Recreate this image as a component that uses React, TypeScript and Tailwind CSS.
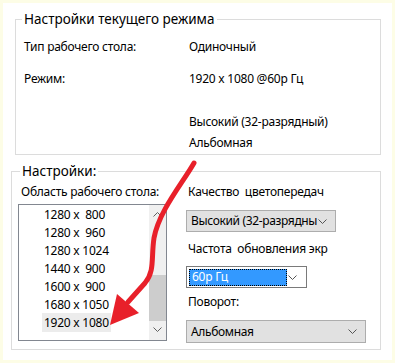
import React from 'react';

const font = { fontFamily: '"Noto Sans", "Open Sans", sans-serif' };

const Chevron = ({ className = '' }: { className?: string }) => (
  <svg width="9" height="5" viewBox="0 0 9 5" className={className}>
    <path d="M0.5 0.5 L4.5 4.5 L8.5 0.5" fill="none" stroke="currentColor" strokeWidth="1" />
  </svg>
);

const resolutions = ['1280 x  800', '1280 x  960', '1280 x 1024', '1440 x  900', '1600 x  900', '1680 x 1050', '1920 x 1080'];

const Select = ({ text, w }: { text: string; w: string }) => (
  <div className={`${w} h-[22px] border border-[#adadad] bg-[#e1e1e1] flex items-center justify-between pl-[4px] pr-[8px]`}>
    <span className="whitespace-nowrap tracking-[-0.35px]">{text}</span>
    <Chevron className="text-[#555] shrink-0" />
  </div>
);

export default function App() {
  return (
    <div
      className="relative w-[395px] h-[363px] bg-white border-[3px] border-[#fdfde6] text-[12px] leading-4 tracking-[-0.25px] text-black overflow-hidden"
      style={font}
    >
      {/* current mode */}
      <fieldset className="ml-[12px] mt-[7px] w-[366px] border border-[#dcdcdc] pb-[3px]">
        <legend className="ml-[6px] px-[2px] text-[13.5px] leading-[18px] tracking-normal">Настройки текущего режима</legend>
        <div className="grid grid-cols-[165px_1fr] pl-[8px]">
          <div className="mt-[11px]">Тип рабочего стола:</div>
          <div className="mt-[11px]">Одиночный</div>
          <div className="mt-[16px]">Режим:</div>
          <div className="mt-[16px]">1920 x 1080 @60p Гц</div>
          <div />
          <div className="mt-[27px]">Высокий (32-разрядный)</div>
          <div />
          <div className="mt-[5px]">Альбомная</div>
        </div>
      </fieldset>

      {/* settings */}
      <fieldset className="ml-[8px] mt-[7px] w-[370px] border border-[#dcdcdc] pb-[6px]">
        <legend className="ml-[8px] px-[2px] text-[13.5px] leading-[18px] tracking-normal">Настройки:</legend>
        <div className="flex">
          <div className="ml-[6px] w-[149px]">
            <div className="mt-[4px] ml-[3px]">Область рабочего стола:</div>
            <div className="mt-[4px] h-[137px] border border-[#828790] bg-white flex">
              <div className="flex-1">
                {resolutions.map((r, i) => (
                  <div key={r} className="h-[18px] flex items-center pl-[23px]">
                    <span className={`whitespace-pre px-[2px] leading-[19px] ${i === 6 ? 'bg-[#ececec]' : ''}`}>{r}</span>
                  </div>
                ))}
              </div>
              <div className="w-[17px] bg-[#f0f0f0] flex flex-col items-center">
                <div className="h-[18px] flex items-center text-[#606060]">
                  <Chevron className="rotate-180" />
                </div>
                <div className="mt-[52px] w-[17px] h-[46px] bg-[#cdcdcd]" />
                <div className="h-[17px] flex items-center text-[#606060]">
                  <Chevron />
                </div>
              </div>
            </div>
          </div>
          <div className="ml-[19px] w-[180px]">
            <div className="mt-[4px] ml-[2px] whitespace-pre">Качество  цветопередач</div>
            <div className="mt-[10px]">
              <Select text="Высокий (32-разрядны" w="w-[150px]" />
            </div>
            <div className="mt-[9px] ml-[2px] whitespace-pre">Частота  обновления экр</div>
            <div className="mt-[9px] w-[121px] h-[22px] border border-[#7a7a7a] bg-white flex items-center justify-between pl-[2px] pr-[9px]">
              <div className="w-[98px] h-[17px] bg-[#3399ff] border border-dotted border-black text-white flex items-center pl-[2px]">
                60p Гц
              </div>
              <Chevron className="text-[#555]" />
            </div>
            <div className="mt-[6px] ml-[2px]">Поворот:</div>
            <div className="mt-[10px]">
              <Select text="Альбомная" w="w-[180px] h-[23px]" />
            </div>
          </div>
        </div>
      </fieldset>

      {/* red arrow annotation */}
      <svg className="absolute left-0 top-0 pointer-events-none" width="395" height="363" viewBox="-3 -3 395 363">
        <path
          d="M188 157 C 176 178, 153 205, 148 232 C 145 252, 149 265, 139 277 L 122 296"
          fill="none"
          stroke="#e8202a"
          strokeWidth="5"
          strokeLinecap="round"
        />
        <path d="M104 319 L 111 288 L 133 307 Z" fill="#e8202a" />
      </svg>
    </div>
  );
}
